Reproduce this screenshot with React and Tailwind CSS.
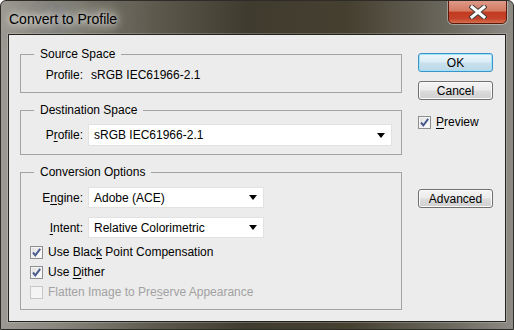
import React from 'react';

const U = ({ children }) => <span className="underline underline-offset-2">{children}</span>;

const CheckBox = ({ checked, disabled }) => (
  <div
    className={`w-[13px] h-[13px] shrink-0 border flex items-center justify-center ${
      disabled
        ? 'border-[#c8c8c8] bg-[#f4f4f4]'
        : 'border-[#8e8f8f] bg-[linear-gradient(135deg,#dcdcdc_0%,#f4f4f4_60%,#ffffff_100%)] shadow-[inset_0_0_0_1px_#f4f4f4]'
    }`}
  >
    {checked && (
      <svg width="11" height="11" viewBox="0 0 11 11">
        <path d="M2 5.5 L4.3 8.3 L9.2 1.8" fill="none" stroke="#4a5d8e" strokeWidth="2" />
      </svg>
    )}
  </div>
);

const Button = ({ children, primary, className = '' }) => (
  <div
    className={`w-[75px] h-[19px] rounded-[3px] border flex items-center justify-center text-[12px] leading-none text-black ${
      primary
        ? 'border-[#3c93c8] bg-[linear-gradient(to_bottom,#eef6fb_0%,#dbecf6_48%,#c9e1ee_52%,#bcd8e8_100%)] shadow-[inset_0_0_0_1px_#9ee3fb]'
        : 'border-[#707070] bg-[linear-gradient(to_bottom,#f4f4f4_0%,#ebebeb_48%,#dddddd_52%,#cfcfcf_100%)] shadow-[inset_0_0_0_1px_#fbfbfb]'
    } ${className}`}
  >
    {children}
  </div>
);

const Select = ({ value, className = '' }) => (
  <div
    className={`bg-white border border-[#e2e2e2] flex items-center justify-between pl-[5px] pr-[6px] text-[12px] text-black ${className}`}
  >
    <span>{value}</span>
    <svg width="8" height="5" viewBox="0 0 8 5">
      <path d="M0 0 H8 L4 5 Z" fill="#000" />
    </svg>
  </div>
);

const Group = ({ title, className = '', children }) => (
  <fieldset className={`border border-[#a3a3a3] px-0 ${className}`}>
    <legend className="ml-[13px] px-[6px] text-[12px] leading-[16px] text-black">{title}</legend>
    {children}
  </fieldset>
);

const Label = ({ children }) => (
  <div className="w-[62px] shrink-0 text-right text-[12px] text-black">{children}</div>
);

export default function App() {
  return (
    <div className="w-[514px] h-[330px] flex flex-col rounded-t-[6px] border border-[#2e2c26] overflow-hidden bg-[linear-gradient(to_right,#9b9991_0%,#87857c_12%,#5d594d_30%,#3f3b2e_48%,#454030_68%,#6c695f_88%,#8d8b84_100%)] font-['Liberation_Sans',Arial,sans-serif]">
      {/* title bar */}
      <div className="h-[33px] flex items-start justify-between shrink-0">
        <span className="pl-[8px] pt-[10px] text-[14px] leading-[16px] text-black [text-shadow:0_0_6px_rgba(255,255,255,0.9),0_0_12px_rgba(255,255,255,0.8),0_0_20px_rgba(230,230,225,0.7),0_0_28px_rgba(220,220,215,0.5)]">
          Convert to Profile
        </span>
        <div className="mr-[6px] w-[59px] h-[24px] -mt-px rounded-b-[5px] border border-[#5a1a10] shadow-[0_0_0_1px_rgba(255,255,255,0.35)] bg-[linear-gradient(to_bottom,#dd9a88_0%,#d47a62_45%,#c23a1f_52%,#c4432a_80%,#d8704c_100%)] flex items-center justify-center">
          <svg width="18" height="14" viewBox="0 0 18 14">
            <path d="M3 2 L15 12 M15 2 L3 12" stroke="#3e3e3e" strokeWidth="5" strokeLinecap="square" />
            <path d="M3 2 L15 12 M15 2 L3 12" stroke="#ffffff" strokeWidth="3" strokeLinecap="square" />
          </svg>
        </div>
      </div>

      {/* client area */}
      <div className="flex-1 mx-[7px] mb-[7px] border border-[#24221c] shadow-[0_0_0_1px_rgba(255,255,255,0.2)] bg-[#ececec] flex">
        <div className="w-[393px] pl-[11px] pt-[11px] flex flex-col gap-[9px]">
          <Group title="Source Space" className="h-[47px]">
            <div className="flex items-center h-[16px] mt-[5px] text-[12px] text-black">
              <Label>Profile:</Label>
              <span className="ml-[8px]">sRGB IEC61966-2.1</span>
            </div>
          </Group>

          <Group title="Destination Space" className="h-[53px]">
            <div className="flex items-center mt-[6px]">
              <Label>
                P<U>r</U>ofile:
              </Label>
              <Select value="sRGB IEC61966-2.1" className="ml-[5px] w-[304px] h-[22px]" />
            </div>
          </Group>

          <Group title="Conversion Options" className="h-[146px]">
            <div className="flex items-center mt-[7px]">
              <Label>
                E<U>n</U>gine:
              </Label>
              <Select value="Adobe (ACE)" className="ml-[5px] w-[176px] h-[21px]" />
            </div>
            <div className="flex items-center mt-[9px]">
              <Label>
                <U>I</U>ntent:
              </Label>
              <Select value="Relative Colorimetric" className="ml-[5px] w-[176px] h-[21px]" />
            </div>
            <div className="mt-[4px] pl-[9px] flex flex-col text-[12px]">
              <div className="h-[20px] flex items-center gap-[5px] text-black">
                <CheckBox checked />
                <span>
                  Use Blac<U>k</U> Point Compensation
                </span>
              </div>
              <div className="h-[20px] flex items-center gap-[5px] text-black">
                <CheckBox checked />
                <span>
                  Use <U>D</U>ither
                </span>
              </div>
              <div className="h-[20px] flex items-center gap-[5px] text-[#a2a2a2]">
                <CheckBox disabled />
                <span>
                  Flatten Image to Pre<U>s</U>erve Appearance
                </span>
              </div>
            </div>
          </Group>
        </div>

        <div className="ml-[16px] pt-[18px] flex flex-col">
          <Button primary>OK</Button>
          <Button className="mt-[9px]">Cancel</Button>
          <div className="mt-[14px] h-[16px] flex items-center gap-[5px] text-[12px] text-black">
            <CheckBox checked />
            <span>
              <U>P</U>review
            </span>
          </div>
          <Button className="mt-[59px]">Advanced</Button>
        </div>
      </div>
    </div>
  );
}
